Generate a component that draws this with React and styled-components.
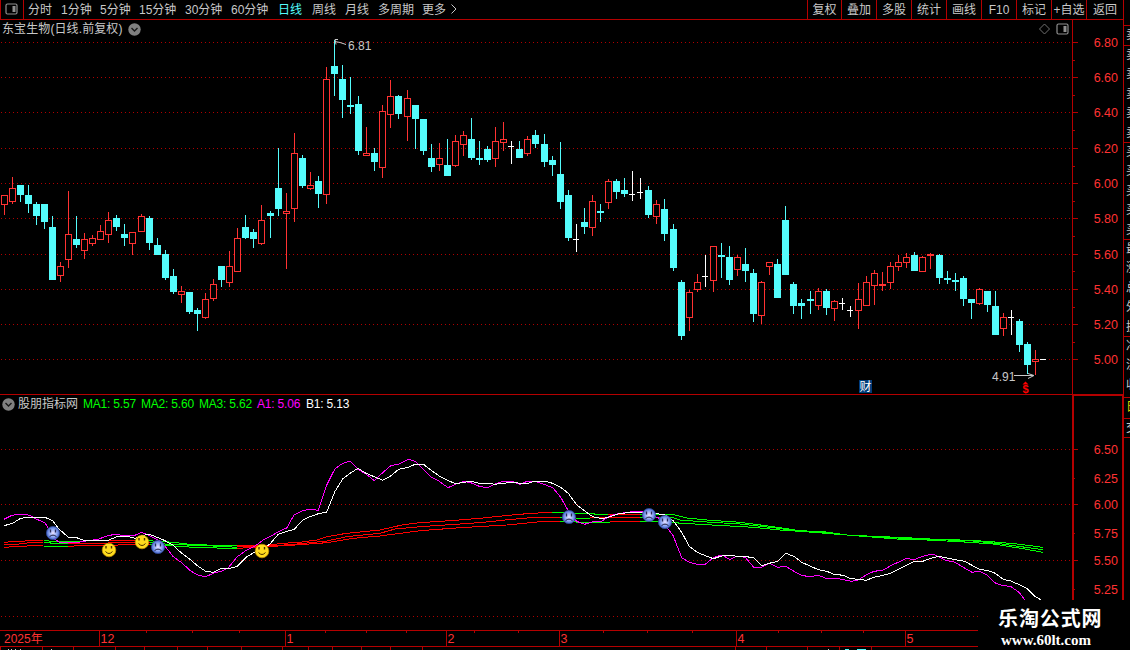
import React from "react";
import styled, { createGlobalStyle } from "styled-components";

const RED = "#b40000";
const UP = "#ff3232";
const DOWN = "#54fcfc";
const GREY = "#c8c8c8";
const FONT = '"Liberation Sans", "Noto Sans CJK SC", sans-serif';

const Global = createGlobalStyle`
  html, body { margin: 0; background: #000; overflow: hidden; }
  * { box-sizing: border-box; }
`;

const Page = styled.div`
  position: relative;
  display: flex;
  width: 1130px;
  height: 650px;
  overflow: hidden;
  background: #000;
  color: ${GREY};
  font: 12px/19px ${FONT};
  white-space: nowrap;
`;
const Main = styled.main`
  display: flex;
  flex-direction: column;
  width: 1123px;
  flex: none;
`;
const Toolbar = styled.nav`
  display: flex;
  justify-content: space-between;
  height: 20px;
  border-bottom: 1px solid ${RED};
`;
const Periods = styled.div`
  display: flex;
`;
const LayoutButton = styled.div`
  width: 24px;
  height: 19px;
  padding: 3px 0 0 4px;
  margin-right: 4px;
  border: solid ${RED};
  border-width: 0 1px;
  line-height: 0;
`;
const Period = styled.span`
  width: ${(p) => p.$w}px;
  padding-top: 1px;
  line-height: 18px;
  color: ${(p) => (p.$active ? DOWN : GREY)};
`;
const Tools = styled.div`
  display: flex;
`;
const Tool = styled.span`
  width: ${(p) => p.$w}px;
  padding-top: 1px;
  border-left: 1px solid ${RED};
  line-height: 18px;
  text-align: center;
`;
const Title = styled.header`
  display: flex;
  align-items: center;
  height: 18px;
  padding-left: 2px;
  gap: 5px;
`;
const TitleText = styled.span`
  padding-top: 1px;
  letter-spacing: 0.1px;
`;
const Spacer = styled.span`
  flex: 1;
`;
const AxisCap = styled.span`
  align-self: stretch;
  width: 51px;
  margin-left: ${(p) => (p.$thick ? "auto" : "-2px")};
  border: solid ${RED};
  border-width: ${(p) => (p.$thick ? "1px 1px 0 2px" : "0 0 0 1px")};
`;
const Legend = styled.header`
  display: flex;
  align-items: center;
  height: 19px;
  padding-left: 2px;
  border-top: 1px solid ${RED};
`;
const LegendItem = styled.span`
  width: ${(p) => p.$w}px;
  color: ${(p) => p.$c};
  font-size: 12px;
  letter-spacing: -0.2px;
`;
const LegendName = styled.span`
  width: 68px;
  padding-left: 3px;
`;
const Chart = styled.svg`
  display: block;
  flex: none;
  overflow: visible;
  font: 12.5px ${FONT};
`;
const Side = styled.aside`
  display: flex;
  flex-direction: column;
  width: 7px;
  padding-top: 25px;
  border-left: 1px solid ${RED};
  overflow: hidden;
`;
const SideCell = styled.div`
  flex: none;
  height: ${(p) => p.$h}px;
  padding-left: 2px;
  border-top: 1px solid ${RED};
  overflow: hidden;
  color: ${(p) => p.$c || GREY};
  line-height: 19.4px;
  white-space: pre;
`;
const Watermark = styled.div`
  position: absolute;
  left: 978px;
  top: 600px;
  width: 152px;
  height: 50px;
  padding-top: 3px;
  background: #000;
  color: #fff;
`;
const MarkName = styled.div`
  padding-left: 20px;
  font: 700 20px/30px "Noto Sans CJK SC", sans-serif;
  letter-spacing: 0.9px;
`;
const MarkUrl = styled.div`
  padding-left: 23px;
  font: bold 15px/14px "Liberation Serif", serif;
`;

const periods = [
  ["分时", 33], ["1分钟", 39], ["5分钟", 39], ["15分钟", 46], ["30分钟", 46], ["60分钟", 47],
  ["日线", 34], ["周线", 33], ["月线", 33], ["多周期", 44], ["更多", 28],
];
const tools = [
  ["复权", 34], ["叠加", 35], ["多股", 35], ["统计", 35], ["画线", 35], ["F10", 35],
  ["标记", 35], ["+自选", 35], ["返回", 37],
];

/* x, high, body top, body bottom, low, kind: r = up, c = down, w = flat */
const candles = `4 195 195 205 215 r;12 177 188 202 204 r;20 185 185 195 202 c;28 185 195 204 213 c;36 202 204 216 225 c;44 204 204 222 229 c;52 216 227 280 280 c;60 262 266 276 282 r;68 191 234 260 268 r;76 216 239 245 248 c;84 233 239 251 259 r;92 235 238 244 246 r;100 225 231 240 240 r;108 212 220 235 243 r;116 215 218 227 231 c;124 224 234 238 246 c;132 232 232 244 255 r;141 214 216 232 232 r;149 216 218 243 250 c;157 238 245 255 255 c;165 250 254 278 280 c;173 269 276 292 294 c;181 286 291 295 303 r;189 292 292 312 314 c;197 308 310 314 331 c;205 293 299 318 319 r;213 279 284 299 301 r;221 266 266 280 287 c;229 251 266 283 287 r;237 228 238 272 272 r;245 215 227 238 239 c;253 229 232 239 248 c;261 205 220 244 245 r;270 211 213 216 238 c;278 148 188 209 216 c;286 193 211 214 269 r;294 133 153 209 222 r;302 155 158 186 188 c;310 172 185 189 190 r;318 176 181 194 208 c;326 67 79 195 204 r;334 40 66 74 96 c;342 65 79 100 118 c;350 77 105 107 114 c;358 96 104 151 155 c;366 127 153 156 156 r;374 148 153 162 171 c;382 105 111 168 178 r;390 80 96 115 128 r;398 95 96 114 119 c;407 90 98 117 141 r;415 105 105 119 149 c;423 119 119 151 155 c;431 144 158 167 172 c;439 143 158 165 171 r;447 139 165 176 176 c;455 135 141 166 167 r;463 131 135 145 156 r;471 118 139 158 160 c;479 141 158 160 165 c;487 146 149 160 162 c;495 127 141 159 167 r;503 122 139 143 151 r;511 141 146 147 164 w;519 141 149 158 158 c;527 136 139 154 156 r;535 130 135 144 148 c;544 134 144 162 167 c;552 156 160 165 176 c;560 142 174 202 209 c;568 190 195 238 241 c;576 224 239 240 252 w;584 208 222 227 234 c;592 195 201 228 236 r;600 204 211 213 222 c;608 179 181 203 209 r;616 179 181 192 199 c;624 178 190 194 197 c;632 171 194 195 201 w;640 178 192 193 199 w;648 186 190 215 218 c;656 200 204 217 224 r;664 199 209 234 241 c;673 224 229 268 271 c;681 280 282 336 340 c;689 290 292 318 331 r;697 274 282 290 292 r;705 255 276 277 287 w;713 246 246 281 292 r;721 243 255 257 278 c;729 246 257 280 285 c;737 255 257 270 276 r;745 248 264 271 282 c;753 269 273 314 322 c;761 281 282 316 324 r;769 262 262 267 275 r;777 259 264 298 298 c;785 206 220 275 275 c;793 282 284 306 314 c;801 299 303 306 319 c;810 291 299 301 314 c;818 288 291 306 310 r;826 289 291 308 315 c;834 300 301 309 321 r;842 298 303 304 310 w;850 306 310 311 317 w;858 283 299 311 329 r;866 276 282 306 306 r;874 270 273 286 305 r;882 272 284 286 291 r;890 262 266 283 289 r;898 255 262 267 271 r;906 253 257 263 268 r;914 252 255 271 271 c;922 256 257 272 272 r;930 253 254 256 269 r;939 254 255 278 284 c;947 271 278 280 284 c;955 273 280 282 291 c;963 276 278 299 306 c;971 299 299 303 319 c;979 288 289 304 305 r;987 291 291 305 312 c;995 291 306 335 335 c;1003 313 317 329 336 r;1011 310 317 318 335 w;1019 319 321 345 352 c;1027 342 344 365 374 c;1035 350 359 362 375 r;1043 359 359 360 360 w`
  .split(";")
  .map((row) => {
    const [x, high, top, bottom, low, kind] = row.split(" ");
    return { x: +x, high: +high, top: +top, bottom: +bottom, low: +low, kind };
  });

const priceTicks = [
  ["6.80", 42], ["6.60", 77], ["6.40", 112], ["6.20", 148], ["6.00", 183],
  ["5.80", 218], ["5.60", 254], ["5.40", 289], ["5.20", 324], ["5.00", 359],
];
const priceMinor = [60, 95, 130, 166, 201, 236, 271, 307, 342];
const indTicks = [["6.50", 449], ["6.25", 478], ["6.00", 504], ["5.75", 533], ["5.50", 560], ["5.25", 589]];

/* curve points are stored at a third of a pixel, relative to an origin */
const pts = (ox, oy, s) =>
  s.trim().split(" ").map((p) => {
    const [x, y] = p.split(",");
    return `${(ox + x / 3).toFixed(1)},${(oy + y / 3).toFixed(1)}`;
  }).join(" ");

const a1 = [
  pts(0, 390, "12,388 36,376 62,372 90,376 110,388 135,398 145,415 160,445 180,458 205,456 240,456 262,452 295,448 320,438 345,433 365,436 400,438 425,427 450,438 475,450 500,475 520,500 545,518 572,543 595,556 617,560 640,550 665,543 685,533 712,500 740,480 762,470 790,450 810,440 835,425 860,414 882,375 905,363 930,357 955,361 980,285 1005,236 1028,220 1050,213"),
  pts(350, 440, "24,88 48,102 73,122 98,98 122,77 146,72 175,58 195,64 218,86 242,110 268,124 294,143 320,131 343,124 362,128 388,139 412,143 435,132 460,124 485,124 510,133 532,124 560,125 585,134 608,143 632,172 655,212 680,244 704,253 728,245 752,246 775,230 800,222 840,216 865,214 875,214 895,225 920,232 940,240"),
  pts(640, 500, "85,88 100,108 125,173 148,187 172,193 196,193 220,173 240,166 252,168 270,179 290,169 316,172 341,202 365,202 388,190 413,202 437,199 462,214 485,226 508,230 535,226 558,235 600,237 634,244 655,240 678,225 702,214 728,211 752,197 800,175 822,179 848,169 872,163 886,165 915,180 945,187 970,202 996,217 1018,214 1042,226 1066,249 1090,257 1112,259 1138,278 1155,300"),
].join(" ");
const b1 = [
  pts(0, 390, "12,407 38,400 60,386 80,382 135,382 158,392 175,415 205,442 230,443 255,452 325,451 350,440 385,440 405,445 425,437 447,433 475,443 495,452 520,466 545,490 568,506 592,527 617,544 640,547 665,534 690,535 712,529 740,500 765,486 785,478 810,462 835,433 860,424 883,418 908,390 930,380 955,371 980,366 1005,304 1028,267 1050,250"),
  pts(350, 440, "24,85 48,100 98,121 122,108 146,88 175,82 195,73 222,74 242,90 268,108 294,122 318,131 362,124 388,130 418,130 435,133 485,127 510,130 535,130 553,124 585,124 608,130 632,142 655,160 680,195 704,213 728,230 755,236 775,232 805,222 840,217 895,217 945,225"),
  pts(640, 500, "100,62 125,97 148,139 172,157 196,167 220,176 245,168 270,166 290,169 340,172 365,197 388,190 413,184 437,160 462,169 485,187 535,209 560,214 582,223 610,226 628,235 678,241 702,232 728,226 752,220 785,203 822,184 848,184 872,175 896,169 940,178 974,184 1018,208 1045,212 1066,220 1090,238 1112,243 1138,254 1160,265 1185,289 1202,299"),
].join(" ");

const R = "#ff0000";
const G = "#00ff00";
const averages = [
  [R, pts(0, 390, "12,457 50,454 130,451")],
  [G, pts(0, 390, "132,451 155,454 250,455")],
  [R, pts(0, 390, "250,452 440,451")],
  [G, pts(0, 390, "440,451 460,453 520,457 560,462 600,464 640,466 712,468")],
  [R, pts(0, 390, "712,467 800,466 850,460 900,457 950,450 980,440 1040,430 1140,420") + " " + pts(350, 440, "160,254 210,248 300,242 390,235 475,226 545,220 605,217")],
  [G, pts(350, 440, "605,217 640,217 690,221 775,223")],
  [R, pts(350, 440, "775,223 870,222")],
  [G, pts(350, 440, "870,222 950,222") + " " + pts(640, 500, "100,44 140,54 210,61 300,67 400,80 480,92 550,95 620,105 700,109 800,113 870,117 960,120 1040,124 1130,132 1208,142")],
  [R, pts(0, 390, "12,463 50,463 90,458 130,457")],
  [G, pts(0, 390, "132,457 160,460 205,460")],
  [R, pts(0, 390, "205,460 450,458")],
  [G, pts(0, 390, "450,458 520,464 600,466 712,472")],
  [R, pts(0, 390, "712,470 800,468 870,464 980,453 1040,440 1140,430") + " " + pts(350, 440, "135,267 210,260 330,252 400,247 475,239 540,233 630,232")],
  [G, pts(350, 440, "630,232 700,235 720,235")],
  [R, pts(350, 440, "720,233 870,232")],
  [G, pts(350, 440, "870,232 950,232") + " " + pts(640, 500, "100,53 120,60 200,66 300,72 400,83 480,94 620,105 720,112 900,119 1000,123 1080,131 1208,149")],
  [R, pts(0, 390, "12,472 60,469 130,466")],
  [G, pts(0, 390, "132,469 205,469")],
  [R, pts(0, 390, "205,469 265,466 450,464")],
  [G, pts(0, 390, "450,464 520,468 580,472 680,475 712,475")],
  [R, pts(0, 390, "712,475 800,470 900,464 980,458 1060,445 1140,438") + " " + pts(350, 440, "210,272 330,263 470,255 560,246 630,244")],
  [G, pts(350, 440, "630,244 700,247 780,247")],
  [R, pts(350, 440, "780,244 870,244")],
  [G, pts(350, 440, "870,244 940,246") + " " + pts(640, 500, "100,68 200,74 340,82 430,91 550,98 620,105 770,117 860,120 960,125 1060,132 1150,146 1208,157")],
];

const Grid = ({ y, x2 = 1072 }) => (
  <line x1="1" x2={x2} y1={y + 0.5} y2={y + 0.5} stroke="#b00000" strokeDasharray="1 3" />
);

const Candle = ({ x, high, top, bottom, low, kind }) => {
  if (kind === "w")
    return (
      <g fill="#fff">
        <rect x={x} y={high} width="1" height={low - high} />
        <rect x={x - 3} y={top} width="6" height="1" />
      </g>
    );
  if (kind === "c")
    return (
      <g fill={DOWN}>
        <rect x={x} y={high} width="1" height={low - high} />
        <rect x={x - 3} y={top} width="7" height={bottom - top} />
      </g>
    );
  return (
    <g fill={UP}>
      <rect x={x} y={high} width="1" height={top - high} />
      <rect x={x} y={bottom} width="1" height={low - bottom} />
      <rect x={x - 2.5} y={top + 0.5} width="6" height={bottom - top - 1} fill="#000" stroke={UP} />
    </g>
  );
};

const Smile = ({ x, y }) => (
  <g transform={`translate(${x} ${y})`}>
    <circle r="6.8" fill="#ffdc1e" stroke="#c89600" strokeWidth=".7" />
    <path d="M-3-4v2.500M2.500-4v2.500" stroke="#4a3200" strokeWidth="1.4" />
    <path d="M-3.500 1.500Q0 5.500 3.500 1.500" fill="none" stroke="#4a3200" />
  </g>
);
const Frown = ({ x, y }) => (
  <g transform={`translate(${x} ${y})`}>
    <circle r="6.600" fill="url(#blue)" stroke="#304a9c" strokeWidth=".8" />
    <path d="M-2.500-3.500v3M2.500-3.500v3" stroke="#2c2c58" strokeWidth="1.3" />
    <path d="M-3.500 3.700Q0 .5 3.500 3.700" fill="none" stroke="#202040" />
  </g>
);

const PanelIcon = () => (
  <svg width="13" height="12" viewBox="0 0 13 12">
    <rect x="1" y="1" width="11" height="10" rx="1.5" fill="none" stroke="#909090" strokeWidth="1.2" />
    <path d="M7.500 3h3v6h-3z" fill="#909090" />
  </svg>
);
const RoundChevron = () => (
  <svg width="13" height="13" viewBox="0 0 13 13">
    <circle cx="6.500" cy="6.500" r="6.200" fill="#808080" />
    <path d="M3.500 5l3 3 3-3" fill="none" stroke="#181818" strokeWidth="1.400" />
  </svg>
);

const PriceChart = () => (
  <Chart width="1123" height="356" viewBox="0 38 1123 356">
    <g shapeRendering="crispEdges">
      {priceTicks.map(([t, y]) => <Grid key={t} y={y} />)}
      <path d="M1072.500 38V394" stroke={RED} />
      {priceTicks.map(([t, y]) => <path key={t} d={`M1073 ${y + 0.5}h5`} stroke={RED} />)}
      {priceMinor.map((y) => <path key={y} d={`M1073 ${y + 0.5}h2`} stroke={RED} />)}
      {candles.map((c) => c.x === 1043
        ? <rect key={c.x} x="1040" y="359" width="6" height="1" fill="#fff" />
        : <Candle key={c.x} {...c} />)}
    </g>
    <g fill={UP}>
      {priceTicks.map(([t, y]) => <text key={t} x="1118" y={y + 5} textAnchor="end">{t}</text>)}
    </g>
    <g fill="none" stroke={GREY}>
      <path d="M338 39.500h-3l1 5M335 41.500l5 1 6 2" />
      <path d="M1014 375.500h19M1028 373.500l6 2-6 3" />
    </g>
    <g fill={GREY}>
      <text x="348" y="50" fontSize="12">6.81</text>
      <text x="992" y="381" fontSize="12">4.91</text>
    </g>
    <rect x="859" y="380" width="13" height="13" fill="#003c78" />
    <text x="859.500" y="391" fontSize="12" fill="#fff">财</text>
    <path d="M1025.500 381.500l3 3h-6z" fill="#f00" />
    <text x="1022.500" y="393" fontSize="11" fontWeight="bold" fill="#f00">$</text>
  </Chart>
);

const IndicatorChart = () => (
  <Chart width="1123" height="217" viewBox="0 413 1123 217">
    <defs>
      <radialGradient id="blue">
        <stop offset="0" stopColor="#e8e0ff" />
        <stop offset=".55" stopColor="#94acf6" />
        <stop offset="1" stopColor="#4464c8" />
      </radialGradient>
    </defs>
    <g shapeRendering="crispEdges">
      {[449, 504, 560, 616].map((y) => <Grid key={y} y={y} />)}
      <path d="M1073 413V600M1123 413V600" stroke={RED} strokeWidth="2" />
      {indTicks.map(([t, y], i) => <path key={t} d={`M1074 ${y + 0.5}h${i % 2 ? 1 : 4}`} stroke={RED} />)}
      <g fill="none">
        {averages.map(([c, p], i) => <polyline key={i} points={p} stroke={c} />)}
        <polyline points={a1} stroke="#ff00ff" />
        <polyline points={b1} stroke="#fff" />
      </g>
    </g>
    <g fill={UP}>
      {indTicks.map(([t, y]) => <text key={t} x="1118" y={y + 5} textAnchor="end">{t}</text>)}
    </g>
    <Frown x={53} y={533} /><Smile x={109} y={550} /><Smile x={142} y={542} />
    <Frown x={158} y={547} /><Smile x={262} y={551} /><Frown x={569} y={517} />
    <Frown x={649} y={515} /><Frown x={665} y={522} />
  </Chart>
);

const months = [["12", 99], ["1", 285], ["2", 446], ["3", 559], ["4", 736], ["5", 905]];
const weekTicks = [146, 192, 239, 325, 366, 406, 474, 518, 603, 647, 692, 778, 821, 863];
const tabEdges = [0, 42, 73, 115, 144, 177, 207, 241, 282, 308, 332, 361, 390, 422, 735, 766, 807, 839, 871];

const DateAxis = () => (
  <Chart width="1123" height="20" viewBox="0 630 1123 20">
    <g stroke={RED} shapeRendering="crispEdges">
      <path d="M0 630.500H978M0 646.500H978" />
      {months.map(([m, x]) => <path key={m} d={`M${x + 0.5} 631v15`} />)}
      {weekTicks.map((x) => <path key={x} d={`M${x + 0.5} 631v2`} />)}
      {tabEdges.map((x) => <path key={x} d={`M${x + 0.5} 647v3`} />)}
      <path stroke={GREY} d="M8 649.500h1M11 649.500h1M15 649.500h1M20 649.500h1M51 649.500h1M828 649.500h1" />
      <path stroke={DOWN} d="M845 649.500h4M857 649.500h9" />
    </g>
    <g fill={UP}>
      <text x="4" y="643" fontSize="12">2025年</text>
      {months.map(([m, x]) => <text key={m} x={x + 1.5} y="643">{m}</text>)}
    </g>
  </Chart>
);

export default function App() {
  return (
    <Page>
      <Global />
      <Main>
        <Toolbar>
          <Periods>
            <LayoutButton><PanelIcon /></LayoutButton>
            {periods.map(([t, w]) => <Period key={t} $w={w} $active={t === "日线"}>{t}</Period>)}
            <svg width="8" height="19"><path d="M1.500 4.500l4.500 4.500-4.500 4.500" fill="none" stroke={GREY} /></svg>
          </Periods>
          <Tools>
            {tools.map(([t, w]) => <Tool key={t} $w={w}>{t}</Tool>)}
          </Tools>
        </Toolbar>
        <Title>
          <TitleText>东宝生物(日线.前复权)</TitleText>
          <RoundChevron />
          <Spacer />
          <svg width="12" height="12"><path d="M5.500 1l5 5-5 5-5-5z" fill="none" stroke="#707070" /></svg>
          <PanelIcon />
          <AxisCap />
        </Title>
        <PriceChart />
        <Legend>
          <RoundChevron />
          <LegendName>股朋指标网</LegendName>
          <LegendItem $w={58} $c={G}>MA1: 5.57</LegendItem>
          <LegendItem $w={58} $c={G}>MA2: 5.60</LegendItem>
          <LegendItem $w={58} $c={G}>MA3: 5.62</LegendItem>
          <LegendItem $w={49} $c="#ff00ff">A1: 5.06</LegendItem>
          <LegendItem $w={49} $c="#fff">B1: 5.13</LegendItem>
          <AxisCap $thick />
        </Legend>
        <IndicatorChart />
        <DateAxis />
      </Main>
      <Side>
        <SideCell $h={20}>卖</SideCell>
        <SideCell $h={97}>{"卖\n卖\n卖\n卖\n卖"}</SideCell>
        <SideCell $h={97}>{"买\n买\n买\n买\n买"}</SideCell>
        <SideCell $h={97}>{"最\n涨\n总\n外\n换"}</SideCell>
        <SideCell $h={61}>{"净\n流\n收"}</SideCell>
        <SideCell $h={21} $c="#d8d800">日</SideCell>
        <SideCell $h={19}>交</SideCell>
        <SideCell $h={163} />
      </Side>
      <Watermark>
        <MarkName>乐淘公式网</MarkName>
        <MarkUrl>www.60lt.com</MarkUrl>
      </Watermark>
    </Page>
  );
}
